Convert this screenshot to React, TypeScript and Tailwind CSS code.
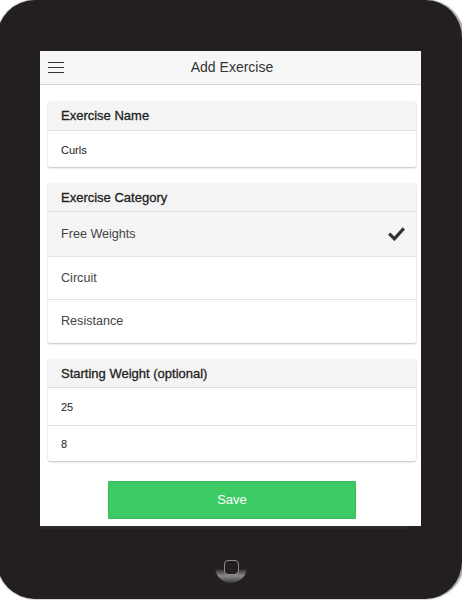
import React from 'react';

const categories = ['Free Weights', 'Circuit', 'Resistance'];

const CardHeader = ({ title, h }: { title: string; h: string }) => (
  <div
    className={`${h} bg-[#f4f4f4] border-b border-[#dedede] px-[13px] pt-[1px] flex items-center text-[13px] text-[#1e1e1e] [-webkit-text-stroke:0.3px_#1e1e1e]`}>
    {title}
  </div>
);

const Check = () => (
  <svg width="17" height="14" viewBox="0 0 17 14" fill="none">
    <path d="M1.2 6.6 L6.4 11.8 L15.8 1.4" stroke="#333" strokeWidth="3.2" />
  </svg>
);

export default function App() {
  return (
    <div className="w-[462px] h-[600px] overflow-hidden bg-white font-['Liberation_Sans',Arial,sans-serif]">
      <div className="ml-[-3px] w-[467px] h-[599px] rounded-[38px] bg-[#231f20] border-r-2 border-[#a9a9a9] shadow-[0_0_2px_rgba(0,0,0,0.6)] pt-[51px] pl-[43px] flex flex-col">
        <div className="w-[381px] h-[475px] bg-white flex flex-col">
          <header className="h-[34px] bg-[#f7f7f7] border-b border-[#d6d6d6] grid grid-cols-[40px_1fr_40px] items-center">
            <div className="pl-2 flex flex-col gap-[3.5px]">
              <span className="block w-4 h-[1.5px] bg-[#333]" />
              <span className="block w-4 h-[1.5px] bg-[#333]" />
              <span className="block w-4 h-[1.5px] bg-[#333]" />
            </div>
            <h1 className="text-center text-[14px] text-[#333] pl-[3px]">Add Exercise</h1>
            <div />
          </header>

          <div className="w-[368px] ml-2 pt-4 flex flex-col gap-4">
            <section className="bg-white shadow-[0_1px_2px_rgba(0,0,0,0.25)] rounded-[2px]">
              <CardHeader title="Exercise Name" h="h-[30px]" />
              <div className="h-[36px] px-[13px] pt-[3px] flex items-center text-[11px] text-[#222]">Curls</div>
            </section>

            <section className="bg-white shadow-[0_1px_2px_rgba(0,0,0,0.25)] rounded-[2px]">
              <CardHeader title="Exercise Category" h="h-[29px]" />
              {categories.map((c, idx) => (
                <div
                  key={c}
                  className={`${idx === 0 ? 'h-[45px] bg-[#f5f5f5]' : 'h-[43px]'} ${
                    idx < 2 ? 'border-b border-[#e3e3e3]' : ''
                  } pl-[13px] pr-[11px] flex items-center justify-between text-[12.6px] text-[#444]`}>
                  <span>{c}</span>
                  {idx === 0 && <Check />}
                </div>
              ))}
            </section>

            <section className="bg-white shadow-[0_1px_2px_rgba(0,0,0,0.25)] rounded-[2px]">
              <CardHeader title="Starting Weight (optional)" h="h-[29px]" />
              <div className="h-[38px] border-b border-[#e3e3e3] px-[13px] pt-[2px] flex items-center text-[11px] text-[#222]">
                25
              </div>
              <div className="h-[35px] px-[13px] pt-[2px] flex items-center text-[11px] text-[#222]">8</div>
            </section>

            <button className="mt-1 self-center w-[248px] h-[38px] bg-[#3dcb66] border border-[#36bb5c] rounded-[1px] text-white text-[13px]">
              Save
            </button>
          </div>
        </div>

        <div className="w-[368px] h-[3px] bg-[#2b2829]" />

        <div className="ml-[175px] mt-[22px] w-8 h-8 rounded-full bg-[linear-gradient(to_bottom,#231f20_55%,#8a8a8a_78%,#3a3839_100%)] flex items-center justify-center">
          <div className="w-4 h-4 rounded-full bg-[#231f20] flex items-center justify-center">
            <div className="w-[15px] h-[15px] rounded-[4px] border-[1.5px] border-[#8c8c8c]" />
          </div>
        </div>
      </div>
    </div>
  );
}
